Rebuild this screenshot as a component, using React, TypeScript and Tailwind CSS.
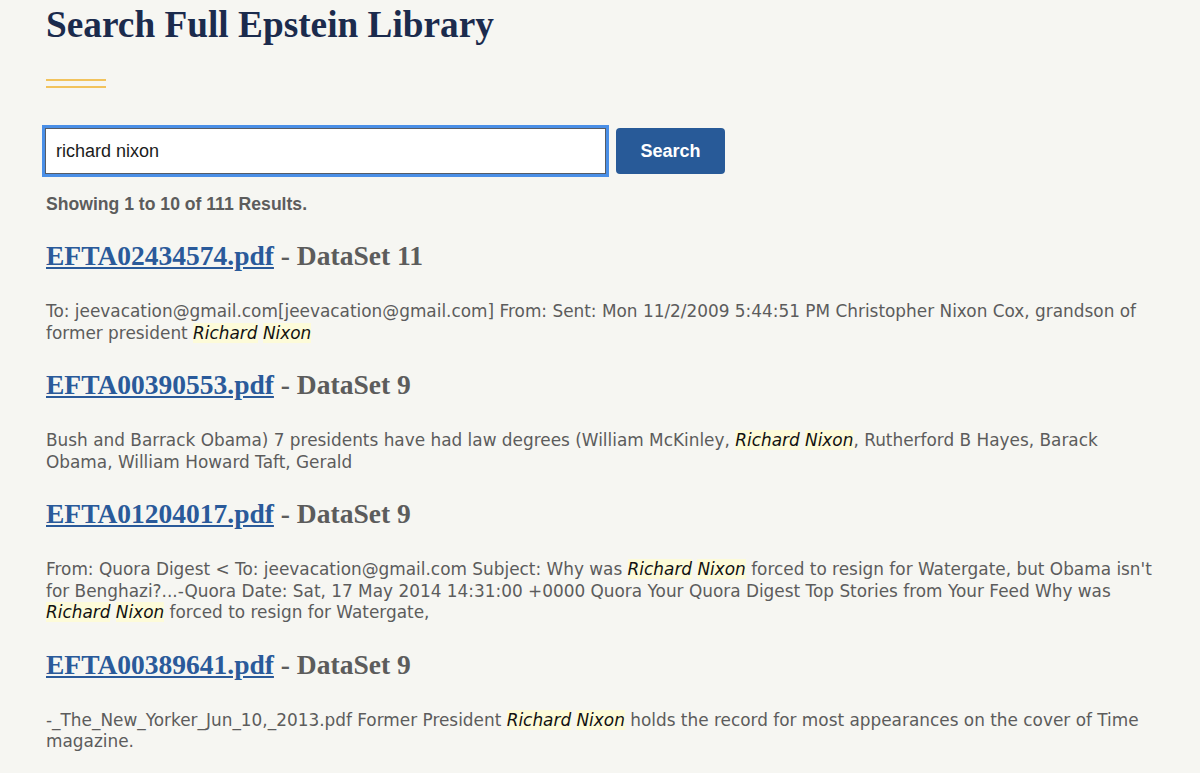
import React, { useState } from "react";

type Result = {
  file: string;
  dataset: string;
  parts: (string | { hl: string })[];
};

const results: Result[] = [
  {
    file: "EFTA02434574.pdf",
    dataset: "DataSet 11",
    parts: [
      "To: jeevacation@gmail.com[jeevacation@gmail.com] From: Sent: Mon 11/2/2009 5:44:51 PM Christopher Nixon Cox, grandson of former president ",
      { hl: "Richard" },
      " ",
      { hl: "Nixon" },
    ],
  },
  {
    file: "EFTA00390553.pdf",
    dataset: "DataSet 9",
    parts: [
      "Bush and Barrack Obama) 7 presidents have had law degrees (William McKinley, ",
      { hl: "Richard" },
      " ",
      { hl: "Nixon" },
      ", Rutherford B Hayes, Barack Obama, William Howard Taft, Gerald",
    ],
  },
  {
    file: "EFTA01204017.pdf",
    dataset: "DataSet 9",
    parts: [
      "From: Quora Digest < To: jeevacation@gmail.com Subject: Why was ",
      { hl: "Richard" },
      " ",
      { hl: "Nixon" },
      " forced to resign for Watergate, but Obama isn't for Benghazi?...-Quora Date: Sat, 17 May 2014 14:31:00 +0000 Quora Your Quora Digest Top Stories from Your Feed Why was ",
      { hl: "Richard" },
      " ",
      { hl: "Nixon" },
      " forced to resign for Watergate,",
    ],
  },
  {
    file: "EFTA00389641.pdf",
    dataset: "DataSet 9",
    parts: [
      "-_The_New_Yorker_Jun_10,_2013.pdf Former President ",
      { hl: "Richard" },
      " ",
      { hl: "Nixon" },
      " holds the record for most appearances on the cover of Time magazine.",
    ],
  },
];

const serif = "font-['Liberation_Serif',serif]";
const sans = "font-['Liberation_Sans',Arial,sans-serif]";
const body = "font-['DejaVu_Sans',sans-serif]";

export default function App() {
  const [query, setQuery] = useState("richard nixon");
  return (
    <div className={`min-h-screen bg-[#f6f6f2] ${sans}`}>
      <div className="w-[1116px] pl-[46px] box-content">
        <h1 className={`${serif} text-[37.3px] font-bold leading-[50px] text-[#1b2b4d]`}>
          Search Full Epstein Library
        </h1>
        <div className="mt-[29px] flex w-[60px] flex-col gap-[5px]">
          <div className="h-[2px] bg-[#f2c35c]" />
          <div className="h-[2px] bg-[#f2c35c]" />
        </div>
        <form
          onSubmit={(e) => e.preventDefault()}
          className="mt-[37px] flex items-center gap-[7px]"
        >
          <div className="-ml-[4px] border-[3px] border-[#4a8fe7]">
            <input
              value={query}
              onChange={(e) => setQuery(e.target.value)}
              className="h-[46px] w-[561px] border border-[#565c65] bg-white px-[10px] text-[18px] text-[#1b1b1b] outline-none"
            />
          </div>
          <button
            type="submit"
            className="h-[46px] w-[109px] rounded-[4px] bg-[#285a98] text-[18px] font-bold text-white"
          >
            Search
          </button>
        </form>
        <p className="mt-[14px] text-[17.6px] font-bold text-[#5c5c5c]">
          Showing 1 to 10 of 111 Results.
        </p>
        <div className="mt-[22px] flex flex-col gap-[24px]">
          {results.map((r) => (
            <div key={r.file}>
              <h3 className={`${serif} text-[27.5px] font-bold leading-[34px] text-[#5c5c5c]`}>
                <a href="#" className="text-[#2a5a9a] underline">
                  {r.file}
                </a>{" "}
                - {r.dataset}
              </h3>
              <p className={`${body} mt-[28px] text-[16.9px] leading-[21.5px] text-[#5c5c5c]`}>
                {r.parts.map((p, i) =>
                  typeof p === "string" ? (
                    <span key={i}>{p}</span>
                  ) : (
                    <mark key={i} className="bg-[#fdfbd9] italic text-[#111]">
                      {p.hl}
                    </mark>
                  )
                )}
              </p>
            </div>
          ))}
        </div>
      </div>
    </div>
  );
}
